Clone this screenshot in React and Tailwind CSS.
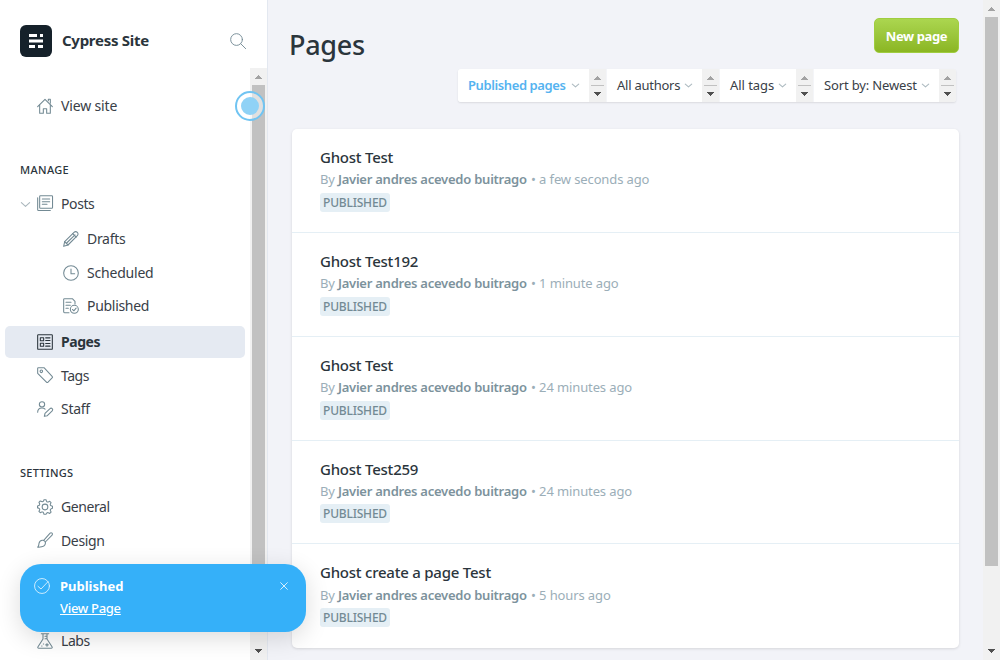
import React from "react";

const icons = {
  home: (
    <>
      <path d="M1 13 12 2l11 11" />
      <path d="M4 10.500V23h5.500v-7h5v7H20V10.500" />
      <path d="M17 4V2h3v6" />
    </>
  ),
  posts: (
    <>
      <rect x="4" y="1" width="19.300" height="19" rx="1.200" />
      <path d="M1 4v18a1.300 1.300 0 0 0 1.300 1.300H20" />
      <path d="M8 6h11M8 10h11M8 14h7" />
    </>
  ),
  pencil: (
    <>
      <path d="M2.500 16 16.500 2a3.300 3.300 0 0 1 5 5L7.500 21 1 23z" />
      <path d="m14.500 4 5.200 5.200M2.500 16l5 5M5.500 18 18 5.800" />
    </>
  ),
  clock: (
    <>
      <circle cx="12" cy="12" r="11" />
      <path d="M12 6v7h5.500" />
    </>
  ),
  published: (
    <>
      <path d="M9 22H2.300A1.300 1.300 0 0 1 1 20.700V2.300A1.300 1.300 0 0 1 2.300 1H14l4 4v4" />
      <path d="M4.500 6.500H12M4.500 11H11M4.500 15.500H8" />
      <circle cx="17" cy="17" r="6" />
      <path d="m14.200 17.200 2 2 3.500-4" />
    </>
  ),
  pages: (
    <>
      <rect x="1" y="1" width="22" height="22" rx="1" />
      <rect x="5" y="5.500" width="5" height="4.500" />
      <rect x="5" y="14" width="5" height="4.500" />
      <path d="M13 5.800h6.500M13 9.700h6.500M13 14.300h6.500M13 18.200h6.500" />
    </>
  ),
  tag: (
    <>
      <path d="M1 2v7.500L14.500 23a1.200 1.200 0 0 0 1.700 0L23 16a1.200 1.200 0 0 0 0-1.700L10.500 1H2a1 1 0 0 0-1 1z" />
      <circle cx="6.500" cy="6.500" r="1.900" />
    </>
  ),
  staff: (
    <>
      <circle cx="7.500" cy="5" r="4" />
      <path d="M1 17c0-4 2.500-6.500 6.500-6.500 2 0 3.500.6 4.600 1.700" />
      <path d="m11 23 1-4.500 7.500-7a2.300 2.300 0 0 1 3.300 3.300L15.500 22z" />
    </>
  ),
  gear: (
    <>
      <circle cx="12" cy="12" r="4.300" />
      <path d="M9.800 3.200 10.500 1h3l.7 2.200a2 2 0 0 0 2.700 1.200l2.200-1 2 2-1 2.200a2 2 0 0 0 1.200 2.700l1.900.7v3l-1.900.7a2 2 0 0 0-1.200 2.700l1 2.200-2 2-2.200-1a2 2 0 0 0-2.700 1.200L13.500 23h-3l-.7-2.200a2 2 0 0 0-2.700-1.200l-2.200 1-2-2 1-2.200a2 2 0 0 0-1.200-2.700L.8 13.500v-3l1.900-.7a2 2 0 0 0 1.200-2.700l-1-2.200 2-2 2.200 1a2 2 0 0 0 2.700-1.200z" />
    </>
  ),
  brush: (
    <>
      <path d="M10 12.500 19.700 1.800a2 2 0 0 1 2.900 2.800L12.500 15" />
      <path d="M9 12.500c2.200.3 3.600 1.700 3.800 3.700C12.500 21 7 23 1 22.700c2-1.500 1.500-3.200 2-5.500.6-3 3-5 6-4.700z" />
    </>
  ),
  flask: (
    <>
      <path d="M6.500 1h11M9 1v8L1.500 20.500c-.8 1.300-.2 2.500 1.200 2.500h18.600c1.400 0 2-1.200 1.200-2.500L15 9V1M12 5h3M12 8.500h3" />
      <path d="M15 15.800v4M13 17.800h4M7 19.500h.5M9.500 16.500h.5" />
    </>
  ),
  search: (
    <>
      <circle cx="9.800" cy="9.800" r="8.800" />
      <path d="m16.200 16.200 7.300 7.300" />
    </>
  ),
  check: (
    <>
      <circle cx="12" cy="12" r="11.200" />
      <path d="m6 12.500 4.500 4L21 5.500" />
    </>
  ),
  close: <path d="m2 2 20 20M22 2 2 22" />,
  chevron: <path d="m1 7 11 10L23 7" />,
};

function Icon({ name, className = "size-4", weight = 1.6 }) {
  return (
    <svg
      viewBox="0 0 24 24"
      className={"shrink-0 overflow-visible " + className}
      fill="none"
      stroke="currentColor"
      strokeWidth={weight}
      strokeLinecap="round"
      strokeLinejoin="round"
    >
      {icons[name]}
    </svg>
  );
}

function Arrow({ down, className = "text-[#505050]" }) {
  return (
    <svg viewBox="0 0 7 4" className={"h-1 w-[7px] shrink-0 " + className} fill="currentColor" shapeRendering="crispEdges">
      {down ? <path d="M0 0h7v1H6v1H5v1H4v1H3V3H2V2H1V1H0z" /> : <path d="M3 0h1v1h1v1h1v1h1v1H0V3h1V2h1V1h1z" />}
    </svg>
  );
}

function NavItem({ icon, label, row, indent = "pl-[37px]", track = "tracking-[-0.2px]", lift = "pb-0", active }) {
  if (active) {
    return (
      <div className={"flex items-center " + row}>
        <div className="ml-[5px] flex h-8 w-60 items-center gap-2 rounded-[5px] bg-[#e5eaf2] pl-8 font-bold text-[#2b353c]">
          <Icon name={icon} />
          <span className={"pb-px " + track}>{label}</span>
        </div>
      </div>
    );
  }
  return (
    <div className={"flex items-center gap-2 text-[#394047] " + indent + " " + row}>
      <span className={"flex " + lift}>
        <Icon name={icon} className="size-4 text-[#738a94]" />
      </span>
      <span className={"pb-[2px] " + track}>{label}</span>
    </div>
  );
}

function Sidebar() {
  return (
    <aside className="flex h-full w-[268px] shrink-0 flex-col border-r border-[#e3e8f0] bg-white">
      <header className="flex h-[68px] shrink-0 items-center pt-3.5 pl-5">
        <div className="flex size-8 items-center justify-center rounded-md bg-[#15212a]">
          <svg viewBox="0 0 14 14" className="size-3.5" fill="#fff">
            <path d="M0 0h8v3H0zM11 0h3v3h-3zM0 5.500h14v3H0zM0 11h6v3H0zM9 11h5v3H9z" />
          </svg>
        </div>
        <span className="ml-2.5 w-[168px] pb-[2px] text-[15px] font-bold tracking-[-0.27px] text-[#2b353c]">Cypress Site</span>
        <Icon name="search" className="size-4 text-[#738a94]" weight={1.400} />
      </header>
      <div className="flex min-h-0 flex-1">
        <nav className="flex w-[250px] flex-col text-[14px]">
          <NavItem icon="home" label="View site" row="mt-[21px] h-[34px]" track="tracking-[-0.15px]" />
          <h2 className="mt-[38px] h-[18px] pl-5 text-[11px] leading-[18px] font-medium tracking-[0.35px] text-[#2b353c]">MANAGE</h2>
          <div className="mt-2 flex h-[34px] items-center pl-[21px]">
            <Icon name="chevron" className="size-[9px] text-[#aab7bd]" weight={3} />
            <NavItem icon="posts" label="Posts" row="h-[34px]" indent="pl-[7px]" track="tracking-[-0.4px]" lift="pb-[2px]" />
          </div>
          <NavItem icon="pencil" label="Drafts" row="h-[36px]" indent="pl-[63px]" track="tracking-[-0.3px]" />
          <NavItem icon="clock" label="Scheduled" row="h-[32px]" indent="pl-[63px]" />
          <NavItem icon="published" label="Published" row="h-[34px]" indent="pl-[63px]" track="tracking-[-0.3px]" />
          <NavItem icon="pages" label="Pages" row="h-[38px]" track="tracking-[-0.45px]" active />
          <NavItem icon="tag" label="Tags" row="h-[30px]" track="tracking-[-0.5px]" lift="pb-[2px]" />
          <NavItem icon="staff" label="Staff" row="h-[36px]" track="tracking-[-0.3px]" />
          <h2 className="mt-[37px] h-[18px] pl-5 text-[11px] leading-[18px] font-medium tracking-[0.25px] text-[#2b353c]">SETTINGS</h2>
          <NavItem icon="gear" label="General" row="mt-[9px] h-[32px]" track="tracking-[-0.42px]" />
          <NavItem icon="brush" label="Design" row="h-[36px]" track="tracking-[-0.35px]" lift="pb-[2px]" />
          <NavItem icon="flask" label="Labs" row="mt-[65px] h-[34px]" track="tracking-[-0.45px]" />
        </nav>
        <div className="flex w-[17px] flex-col items-center bg-[#f1f1f1] pt-[7px] pb-[7px]">
          <Arrow className="text-[#a3a3a3]" />
          <div className="mt-1.5 h-[505px] w-[13px] bg-[#c1c1c1]" />
          <div className="mt-auto flex"><Arrow down /></div>
        </div>
      </div>
    </aside>
  );
}

function Filter({ label, width, track, blue }) {
  return (
    <div className="flex h-[33px]">
      <div className={"flex items-center justify-between bg-white " + width}>
        <span className={"whitespace-nowrap " + track + (blue ? " font-semibold text-[#55b3f0]" : "")}>{label}</span>
        <Icon name="chevron" className="size-[7px] text-[#aebbc1]" weight={3.800} />
      </div>
      <div className="flex w-[17px] flex-col items-center bg-[#f1f1f1] pt-[7px]">
        <Arrow className="text-[#a3a3a3]" />
        <div className="mt-[5px] h-px w-[13px] bg-[#c1c1c1]" />
        <div className="mt-[6px] flex"><Arrow down /></div>
      </div>
    </div>
  );
}

const pages = [
  { title: "Ghost Test", when: "a few seconds ago" },
  { title: "Ghost Test192", when: "1 minute ago" },
  { title: "Ghost Test", when: "24 minutes ago" },
  { title: "Ghost Test259", when: "24 minutes ago", height: "h-[103px]", badgeGap: "mt-[2px]" },
  { title: "Ghost create a page Test", when: "5 hours ago", titleHeight: "h-[24px]", badgeGap: "mt-[2px]" },
];

function PageRow({ title, when, height = "h-[104px]", titleHeight = "h-[23px]", badgeGap = "mt-[3px]" }) {
  return (
    <li className={"flex flex-col items-start border-b border-[#e5eff5] pt-[17px] pl-7 last:h-[103.5px] last:border-b-0 " + height}>
      <h3 className={"text-[15px] leading-[22px] font-medium tracking-[-0.23px] text-[#2b353c] " + titleHeight}>{title}</h3>
      <p className="flex h-[21px] text-[13px] leading-[21px] whitespace-pre text-[#9baeb8]">
        <span className="tracking-[-0.2px]">By </span>
        <span className="font-semibold tracking-[-0.24px] text-[#7c929c]">Javier andres acevedo buitrago</span>
        <span className="ml-px tracking-[-0.12px]"> • {when}</span>
      </p>
      <span className={"flex h-[19px] w-[70px] items-center justify-center rounded-[3px] bg-[#e5eff5] text-[12px] font-medium tracking-[-0.2px] text-[#738a94] " + badgeGap}>
        PUBLISHED
      </span>
    </li>
  );
}

function Toast() {
  return (
    <div className="absolute top-[564px] left-5 flex h-[68px] w-[286px] rounded-[21px] bg-[#35b0f9] pt-3.5 pl-3.5 text-white shadow-[0_6px_24px_rgba(0,0,0,0.14)]">
      <Icon name="check" className="size-4 text-[#d5effe]" weight={1.400} />
      <div className="ml-2.5 flex w-[220px] flex-col text-[13px] leading-[22px]">
        <span className="-mt-[3px] font-bold tracking-[0px]">Published</span>
        <a className="w-fit font-medium tracking-[-0.3px] underline underline-offset-1">View Page</a>
      </div>
      <Icon name="close" className="mt-1 size-2 text-[#d5effe]" weight={3} />
    </div>
  );
}

export default function App() {
  return (
    <div className="relative flex h-[660px] w-[1000px] overflow-hidden bg-[#f2f3f8] font-['Noto_Sans',sans-serif]">
      <Sidebar />
      <main className="flex w-[715px] flex-col pl-[22px]">
        <div className="mt-[18px] mr-6 flex h-[51px] items-start justify-between">
          <h1 className="mt-2 -ml-px text-[27px] leading-[38px] font-medium tracking-[-0.3px] text-[#2b353c]">Pages</h1>
          <button className="h-[35px] w-[85px] rounded-[5px] border border-[#a0cd40] bg-linear-to-b from-[#abd64f] to-[#8bb622] pt-[2px] text-[13px] font-bold tracking-[-0.4px] text-white">
            New page
          </button>
        </div>
        <div className="mr-[27px] flex justify-end text-[13px] text-[#394047]">
          <div className="flex gap-px overflow-hidden rounded-[3px] bg-[#f4f5f8] shadow-[0_1px_2px_rgba(0,0,0,0.1)]">
            <Filter label="Published pages" width="w-[131px] pr-[10px] pl-[10px]" track="tracking-[-0.4px]" blue />
            <Filter label="All authors" width="w-[95px] pr-[10px] pl-[10px]" track="tracking-[-0.25px]" />
            <Filter label="All tags" width="w-[76px] pr-[10px] pl-[10px]" track="tracking-[-0.05px]" />
            <Filter label="Sort by: Newest" width="w-[125px] pr-[10px] pl-[10px]" track="tracking-[-0.15px]" />
          </div>
        </div>
        <ul className="mt-[27px] ml-0.5 w-[667px] rounded-[5px] bg-white shadow-[0_1px_3px_rgba(0,0,0,0.12)]">
          {pages.map((page, index) => (
            <PageRow key={index} {...page} />
          ))}
        </ul>
      </main>
      <div className="flex w-[17px] flex-col items-center bg-[#f1f1f1] pt-[7px] pb-[7px]">
        <Arrow className="text-[#a3a3a3]" />
        <div className="mt-1.5 h-[549px] w-[13px] bg-[#c1c1c1]" />
        <div className="mt-auto flex"><Arrow down /></div>
      </div>
      <div className="absolute top-[91px] left-[235px] flex size-[30px] items-center justify-center rounded-full border-2 border-[#70c4f2] bg-white/50">
        <div className="size-[18px] rounded-full bg-[#8fd2f6]" />
      </div>
      <Toast />
    </div>
  );
}
